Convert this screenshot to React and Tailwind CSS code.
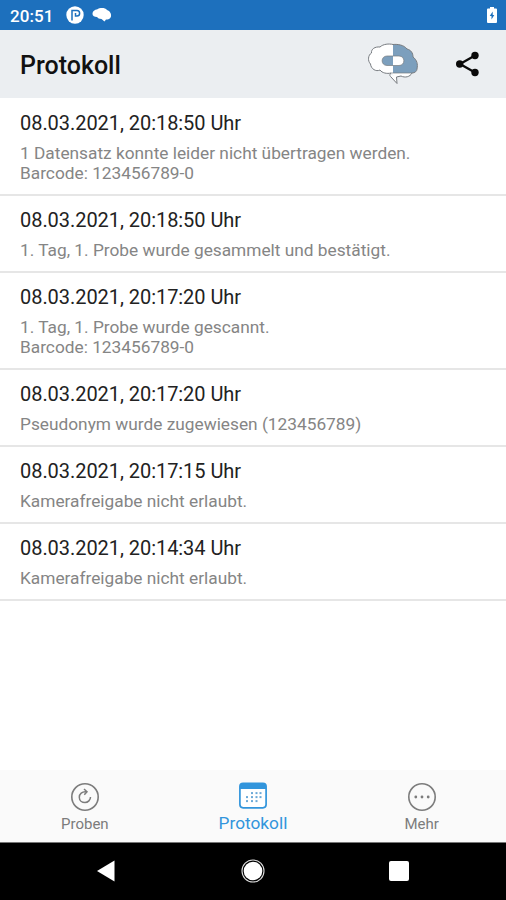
import React from 'react';

const entries = [
  { time: '08.03.2021, 20:18:50 Uhr', lines: ['1 Datensatz konnte leider nicht übertragen werden.', 'Barcode: 123456789-0'] },
  { time: '08.03.2021, 20:18:50 Uhr', lines: ['1. Tag, 1. Probe wurde gesammelt und bestätigt.'] },
  { time: '08.03.2021, 20:17:20 Uhr', lines: ['1. Tag, 1. Probe wurde gescannt.', 'Barcode: 123456789-0'] },
  { time: '08.03.2021, 20:17:20 Uhr', lines: ['Pseudonym wurde zugewiesen (123456789)'] },
  { time: '08.03.2021, 20:17:15 Uhr', lines: ['Kamerafreigabe nicht erlaubt.'] },
  { time: '08.03.2021, 20:14:34 Uhr', lines: ['Kamerafreigabe nicht erlaubt.'] },
];

const BrainLogo = () => (
  <svg width="52" height="44" viewBox="0 0 52 44" fill="none">
    <path d="M26 2.5C22 1.5 16 2 13 5C8 4.5 4 7 4.5 11C1 13 0.5 19 3.5 22C4 27 9 30 13 28C15 31 21 32 26 31Z" fill="#fff" />
    <path d="M26 2.5C31 2 37 3 40 7C44 8 46 11 46 15C50 18 51 23 50 27C49 30 47 31 45 31H26Z" fill="#7c9fbd" />
    <path d="M24 31H45C43 35 38 36 34 34L28 35Z" fill="#fff" />
    <path d="M22 32L30 41.5V35Z" fill="#fff" />
    <path d="M26 14H20C13.500 14 13.500 23.500 20 23.500H26Z" fill="#7c9fbd" />
    <path d="M26 14H32C38.500 14 38.500 23.500 32 23.500H26Z" fill="#fff" />
    <g stroke="#777b80" strokeWidth="1">
      <path d="M26 2.5C22 1.5 16 2 13 5C8 4.5 4 7 4.5 11C1 13 0.5 19 3.5 22C4 27 9 30 13 28C15 31 20 32 24 31C22 33 23 34 24 35L30 41.5L29.500 35L34 34C38 36 43 35 45 31C48 31 50 29 50 27C51 22 50 18 46 15C46 11 44 8 40 7C37 3 31 2 26 2.5Z" />
      <path d="M24 31H45M20 14H32C38.500 14 38.500 23.500 32 23.500H20C13.500 23.500 13.500 14 20 14Z" strokeWidth="0.7" />
    </g>
  </svg>
);

const ProbenIcon = () => (
  <svg width="30" height="30" viewBox="0 0 30 30" fill="none" stroke="currentColor">
    <circle cx="15" cy="15" r="13.2" strokeWidth="1.6" />
    <path d="M16.5 9.8C12 9.2 9.3 12 9.3 15.2C9.3 18.5 12 20.5 15 20.5C18 20.5 20.5 18 20.5 15" strokeWidth="1.5" />
    <path d="M14 7L17 9.8L14.3 12.8" strokeWidth="1.5" />
  </svg>
);

const dots = [
  [14, 12], [18.5, 12], [22.5, 12],
  [9, 16], [14, 16], [18.5, 16], [22.5, 16],
  [9, 20], [14, 20], [18.5, 20],
];

const ProtokollIcon = () => (
  <svg width="30" height="30" viewBox="0 0 30 30" fill="none">
    <rect x="1.9" y="2.4" width="26.2" height="24.4" rx="3.2" fill="#fff" stroke="#3295dc" strokeWidth="1.7" />
    <path d="M2 8V5.5Q2 2.5 5 2.5H25Q28 2.5 28 5.5V8Z" fill="#3295dc" />
    {dots.map(([x, y]) => (
      <rect key={`${x}-${y}`} x={x - 1} y={y - 0.9} width="2" height="2" fill="#6ba9d7" />
    ))}
  </svg>
);

const MehrIcon = () => (
  <svg width="30" height="30" viewBox="0 0 30 30" fill="none">
    <circle cx="15" cy="15" r="13.2" stroke="currentColor" strokeWidth="1.6" />
    <g fill="currentColor">
      <circle cx="8.8" cy="15" r="1.4" />
      <circle cx="15" cy="15" r="1.4" />
      <circle cx="21.2" cy="15" r="1.4" />
    </g>
  </svg>
);

const App = () => {
  return (
    <div className="flex h-[900px] w-[506px] flex-col overflow-hidden bg-white font-['Roboto',sans-serif]">
      {/* Status bar */}
      <div className="flex h-[30px] shrink-0 items-center bg-[#1d70bd] pl-[10px] pr-2 text-white">
        <span className="w-[56px] pt-[2px] text-[17px] font-medium leading-5 tracking-[0.1px]">20:51</span>
        <svg width="18" height="18" viewBox="0 0 18 18">
          <circle cx="9" cy="9" r="8.7" fill="#fff" />
          <path d="M6 14.500V4.500H11C14.500 4.500 14.500 10 11 10H9.500V7" fill="none" stroke="#1d70bd" strokeWidth="1.500" />
        </svg>
        <svg width="20" height="16" viewBox="0 0 20 16" className="ml-2">
          <path d="M0.5 7C0.500 4 3 2.500 5 2.500C8 0.500 13 0.500 15 3C18 4 19.500 7 19 9.500C18.500 12 16 12.500 14 12.500L12.500 14.500L9.500 12C7 12 6 11 5 10C2.500 10 0.500 9 0.500 7Z" fill="#fff" />
        </svg>
        <svg width="12" height="18" viewBox="0 0 12 18" className="ml-auto">
          <path d="M4 1H8V2.5H10Q11 2.5 11 3.5V16Q11 17 10 17H2Q1 17 1 16V3.5Q1 2.5 2 2.5H4Z" fill="#fff" />
          <path d="M6.7 5.5L3.7 10H5.5V13.5L8.3 9H6.7Z" fill="#1d70bd" />
        </svg>
      </div>

      {/* App bar */}
      <header className="flex h-[68px] shrink-0 items-center bg-[#ebeef1] pl-5 pr-[25px]">
        <h1 className="pt-[3px] text-[25px] font-medium leading-8 text-[#111]">Protokoll</h1>
        <div className="ml-auto mr-[36px]">
          <BrainLogo />
        </div>
        <svg width="26" height="26" viewBox="0 0 26 26">
          <path d="M20 4.5L5 13L20 21.5" fill="none" stroke="#0a0a0a" strokeWidth="2.3" />
          <circle cx="20" cy="4.5" r="3.7" fill="#0a0a0a" />
          <circle cx="4.7" cy="13" r="3.7" fill="#0a0a0a" />
          <circle cx="20" cy="21.5" r="3.7" fill="#0a0a0a" />
        </svg>
      </header>

      {/* Log entries */}
      <main className="flex-1 pt-px">
        {entries.map((entry, i) => (
          <div key={i} className="border-b-2 border-[#e6e6e6] px-5 pb-[11px] pt-[10px]">
            <p className="text-[20px] leading-7 tracking-[-0.05px] text-[#222]">{entry.time}</p>
            <div className="mt-[6px] text-[17.3px] leading-5 text-[#858585]">
              {entry.lines.map((line) => (
                <p key={line} className="whitespace-nowrap">{line}</p>
              ))}
            </div>
          </div>
        ))}
      </main>

      {/* Tab bar */}
      <nav className="grid h-[72px] shrink-0 grid-cols-3 bg-[#fafafa] text-[#7c7c7c]">
        <div className="flex flex-col items-center pl-px pt-3">
          <ProbenIcon />
          <span className="mt-[2px] text-[15px] leading-5">Proben</span>
        </div>
        <div className="flex flex-col items-center pt-[11px] text-[#3295dc]">
          <ProtokollIcon />
          <span className="mt-[2px] text-[17.3px] leading-5">Protokoll</span>
        </div>
        <div className="flex flex-col items-center pt-3">
          <MehrIcon />
          <span className="mt-[2px] text-[15px] leading-5">Mehr</span>
        </div>
      </nav>

      {/* System navigation */}
      <div className="flex h-[58px] shrink-0 items-center justify-between border-t border-[#777] bg-black pb-[2px] pl-[96px] pr-[97px]">
        <svg width="20" height="22" viewBox="0 0 20 22">
          <path d="M1 11L18.5 0.5V21.5Z" fill="#fff" />
        </svg>
        <svg width="24" height="24" viewBox="0 0 24 24">
          <circle cx="12" cy="12" r="9.3" fill="#fff" />
          <circle cx="12" cy="12" r="11" fill="none" stroke="#ddd" strokeWidth="1.1" />
        </svg>
        <div className="h-[20px] w-[20px] rounded-[2px] bg-white" />
      </div>
    </div>
  );
};

export default App;
